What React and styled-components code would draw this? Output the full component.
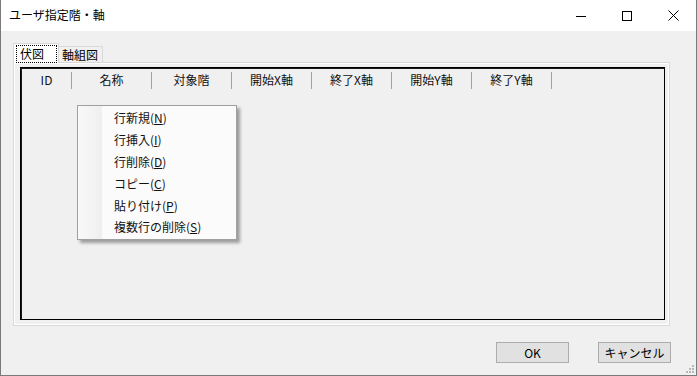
import React from "react";
import styled, { createGlobalStyle } from "styled-components";

const GlobalStyle = createGlobalStyle`
  html, body {
    margin: 0;
    padding: 0;
    background: #fff;
  }
  body {
    font-family: "Noto Sans CJK JP", "Noto Sans", sans-serif;
    font-size: 12px;
    color: #000;
  }
`;

const Window = styled.div`
  position: relative;
  width: 697px;
  height: 376px;
  box-sizing: border-box;
  border-left: 1px solid #7a7a7a;
  border-right: 1px solid #7a7a7a;
  border-bottom: 1px solid #7a7a7a;
  background: #f0f0f0;
  display: flex;
  flex-direction: column;
`;

const TitleBar = styled.div`
  height: 31px;
  flex: 0 0 31px;
  background: #fff;
  display: flex;
  align-items: center;
`;

const Title = styled.div`
  flex: 1;
  padding-left: 8px;
  font-size: 12px;
  line-height: 1;
  padding-bottom: 1px;
`;

const Controls = styled.div`
  display: flex;
  height: 100%;
`;

const ControlButton = styled.div`
  width: 46px;
  height: 100%;
  display: flex;
  align-items: center;
  justify-content: center;
`;

const Body = styled.div`
  flex: 1;
  display: flex;
  flex-direction: column;
  padding: 12px 0 0 12px;
`;

const TabStrip = styled.div`
  display: flex;
  align-items: flex-end;
  height: 20px;
  position: relative;
  z-index: 2;
`;

const Tab = styled.div`
  box-sizing: border-box;
  width: ${(p) => p.width}px;
  height: ${(p) => (p.active ? 20 : 17)}px;
  background: ${(p) => (p.active ? "#fff" : "#f0f0f0")};
  border: 1px solid #d9d9d9;
  border-bottom: ${(p) => (p.active ? "none" : "1px solid #d9d9d9")};
  border-left: ${(p) => (p.first ? "1px solid #d9d9d9" : "none")};
  display: flex;
  align-items: center;
  padding-left: ${(p) => (p.active ? 3 : 3)}px;
  font-size: 12px;
`;

const FocusLabel = styled.span`
  display: flex;
  align-items: center;
  box-sizing: border-box;
  width: 39px;
  height: 16px;
  padding-left: 3px;
  margin-top: 1px;
  outline: 1px dotted #000;
  line-height: 1;
`;

const TabPanel = styled.div`
  box-sizing: border-box;
  width: 657px;
  height: 264px;
  margin-top: -1px;
  border: 1px solid #d9d9d9;
  background: #f0f0f0;
  box-shadow: inset 1px 1px 0 #fff, inset -1px -1px 0 #fff;
  padding: 4px 4px 5px 6px;
`;

const Grid = styled.div`
  box-sizing: border-box;
  width: 645px;
  height: 253px;
  border: 1px solid #000;
  box-shadow: inset 1px 1px 0 #1a1a1a;
  background: #f0f0f0;
  padding: 2px 0 0 1px;
`;

const HeaderRow = styled.div`
  display: flex;
  align-items: center;
  height: 20px;
`;

const HeaderCell = styled.div`
  width: ${(p) => p.width}px;
  text-align: center;
  font-size: 12px;
  line-height: 20px;
  color: #111;
`;

const Divider = styled.div`
  width: 1px;
  height: 17px;
  background: #a0a0a0;
`;

const Footer = styled.div`
  display: flex;
  justify-content: flex-end;
  gap: 29px;
  margin-top: 16px;
  padding-right: 25px;
`;

const Button = styled.div`
  box-sizing: border-box;
  width: 73px;
  height: 21px;
  background: #e1e1e1;
  border: 1px solid #adadad;
  display: flex;
  align-items: center;
  justify-content: center;
  font-size: 12px;
`;

const Menu = styled.div`
  position: absolute;
  left: 76px;
  top: 105px;
  width: 160px;
  box-sizing: border-box;
  border: 1px solid #a0a0a0;
  background: linear-gradient(to right, #f9f9f9 0, #efefef 24px, #fbfbfb 24px);
  box-shadow: 3px 3px 3px rgba(0, 0, 0, 0.35);
  padding: 1px 0 1px 0;
`;

const MenuItem = styled.div`
  height: 21.8px;
  display: flex;
  align-items: center;
  padding-left: 36px;
  font-size: 12px;
  color: #111;
`;

const Key = styled.span`
  text-decoration: underline;
`;

const Grip = styled.svg`
  position: absolute;
  right: 2px;
  bottom: 2px;
`;

const columns = [
  { label: "ID", width: 49 },
  { label: "名称", width: 79 },
  { label: "対象階", width: 79 },
  { label: "開始X軸", width: 79 },
  { label: "終了X軸", width: 79 },
  { label: "開始Y軸", width: 79 },
  { label: "終了Y軸", width: 79 },
];

const menuItems = [
  ["行新規(", "N", ")"],
  ["行挿入(", "I", ")"],
  ["行削除(", "D", ")"],
  ["コピー(", "C", ")"],
  ["貼り付け(", "P", ")"],
  ["複数行の削除(", "S", ")"],
];

export default function App() {
  return (
    <>
      <GlobalStyle />
      <Window>
        <TitleBar>
          <Title>ユーザ指定階・軸</Title>
          <Controls>
            <ControlButton>
              <svg width="10" height="10" viewBox="0 0 10 10">
                <path d="M0 5.5H10" stroke="#000" strokeWidth="1" />
              </svg>
            </ControlButton>
            <ControlButton>
              <svg width="10" height="10" viewBox="0 0 10 10">
                <rect x="0.5" y="0.5" width="9" height="9" fill="none" stroke="#000" strokeWidth="1" />
              </svg>
            </ControlButton>
            <ControlButton>
              <svg width="11" height="11" viewBox="0 0 11 11">
                <path d="M0.5 0.5L10.5 10.5M10.5 0.5L0.5 10.5" stroke="#000" strokeWidth="1" />
              </svg>
            </ControlButton>
          </Controls>
        </TitleBar>
        <Body>
          <TabStrip>
            <Tab active first width={46}>
              <FocusLabel>伏図</FocusLabel>
            </Tab>
            <Tab width={44}>軸組図</Tab>
          </TabStrip>
          <TabPanel>
            <Grid>
              <HeaderRow>
                {columns.map((c) => (
                  <React.Fragment key={c.label}>
                    <HeaderCell width={c.width}>{c.label}</HeaderCell>
                    <Divider />
                  </React.Fragment>
                ))}
              </HeaderRow>
            </Grid>
          </TabPanel>
          <Footer>
            <Button>OK</Button>
            <Button>キャンセル</Button>
          </Footer>
        </Body>
        <Menu>
          {menuItems.map(([a, k, b]) => (
            <MenuItem key={a}>
              {a}
              <Key>{k}</Key>
              {b}
            </MenuItem>
          ))}
        </Menu>
        <Grip width="8" height="8" viewBox="0 0 8 8">
          <g fill="#b8b8b8">
            <rect x="6" y="0" width="2" height="2" />
            <rect x="3" y="3" width="2" height="2" />
            <rect x="6" y="3" width="2" height="2" />
            <rect x="0" y="6" width="2" height="2" />
            <rect x="3" y="6" width="2" height="2" />
            <rect x="6" y="6" width="2" height="2" />
          </g>
        </Grip>
      </Window>
    </>
  );
}
